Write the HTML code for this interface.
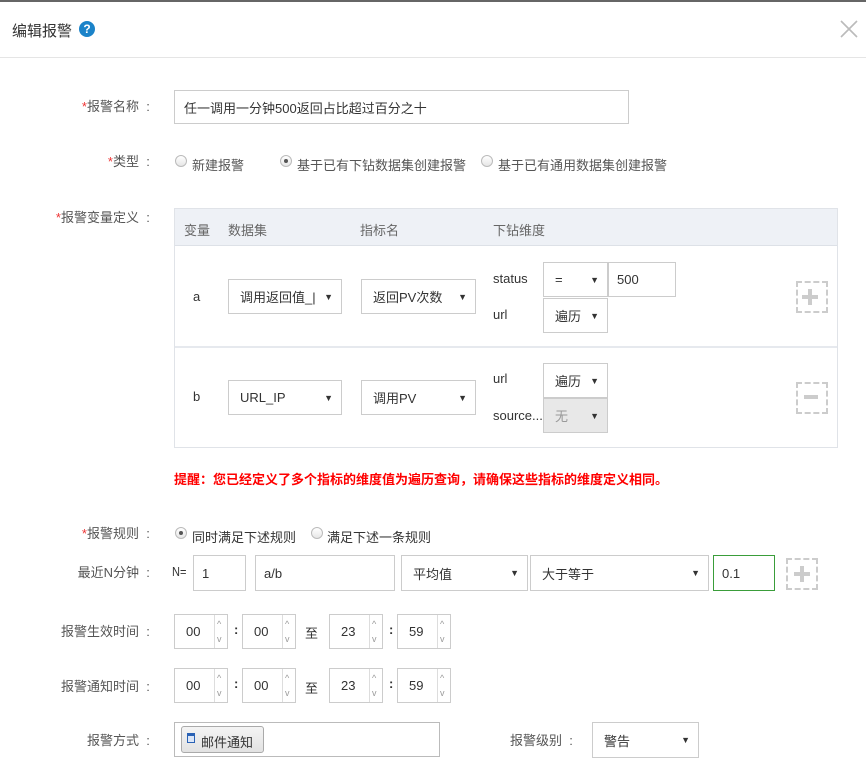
<!DOCTYPE html>
<html><head><meta charset="utf-8"><style>
*{box-sizing:border-box;margin:0;padding:0}
body{width:866px;height:765px;background:#fff;position:relative;overflow:hidden;font-family:"Liberation Sans","Noto Sans CJK SC",sans-serif;font-size:13px;color:#555}
.a{position:absolute;white-space:nowrap}
.lbl{position:absolute;text-align:right;white-space:nowrap;line-height:16px}
.lbl .c{display:inline-block;width:18px;text-align:center}
.r{color:#e33}
.box{position:absolute;border:1px solid #ccc;background:#fff;line-height:normal;padding-left:11px;display:flex;align-items:center;color:#333}
.sel::after{content:"▼";position:absolute;right:8px;font-size:9px;color:#333;top:50%;transform:translateY(-50%)}
.radio{position:absolute;width:12px;height:12px;border-radius:50%;border:1px solid #bbb;background:linear-gradient(#fff,#e6e6e6)}
.radio.on::after{content:"";position:absolute;left:3px;top:3px;width:4px;height:4px;border-radius:50%;background:#555}
.dash{position:absolute;border:2px dashed #ccc;width:32px;height:32px}
.spin{position:absolute;border:1px solid #ccc;height:35px;width:54px;color:#333}
.spin span{position:absolute;left:11px;top:9px}
.spin i{position:absolute;left:39px;top:0;bottom:0;width:1px;background:#ddd}
.spin b{position:absolute;left:42px;font-weight:normal;font-size:9px;color:#999}
</style></head><body>
<div class="a" style="left:0;top:0;width:866px;height:2px;background:#666"></div>
<div class="a" style="left:12px;top:20px;font-size:15px;color:#333">编辑报警</div>
<div class="a" style="left:79px;top:21px;width:16px;height:16px;border-radius:50%;background:#1b83c9;color:#fff;font-size:12px;font-weight:bold;text-align:center;line-height:16px">?</div>
<svg class="a" style="left:840px;top:20px" width="18" height="18"><path d="M1 1L17 17M17 1L1 17" stroke="#bbb" stroke-width="1.6"/></svg>
<div class="a" style="left:0;top:57px;width:866px;height:1px;background:#e5e5e5"></div>

<div class="lbl" style="right:709px;top:99px"><span class="r">*</span>报警名称<span class="c">:</span></div>
<div class="box" style="left:174px;top:90px;width:455px;height:34px;padding-left:9px">任一调用一分钟500返回占比超过百分之十</div>

<div class="lbl" style="right:709px;top:154px"><span class="r">*</span>类型<span class="c">:</span></div>
<div class="radio" style="left:175px;top:155px"></div><div class="a" style="left:192px;top:155px">新建报警</div>
<div class="radio on" style="left:280px;top:155px"></div><div class="a" style="left:297px;top:155px">基于已有下钻数据集创建报警</div>
<div class="radio" style="left:481px;top:155px"></div><div class="a" style="left:498px;top:155px">基于已有通用数据集创建报警</div>

<div class="lbl" style="right:709px;top:210px"><span class="r">*</span>报警变量定义<span class="c">:</span></div>
<div class="a" style="left:174px;top:208px;width:664px;height:240px;border:1px solid #e0e3e8"></div>
<div class="a" style="left:175px;top:209px;width:662px;height:37px;background:#eef1f6;border-bottom:1px solid #dde1e7"></div>
<div class="a" style="left:184px;top:220px;color:#666">变量</div>
<div class="a" style="left:228px;top:220px;color:#666">数据集</div>
<div class="a" style="left:360px;top:220px;color:#666">指标名</div>
<div class="a" style="left:493px;top:220px;color:#666">下钻维度</div>
<div class="a" style="left:175px;top:346px;width:662px;height:2px;background:#e6e9ee"></div>

<div class="a" style="left:193px;top:289px;color:#333">a</div>
<div class="box sel" style="left:228px;top:279px;width:114px;height:35px">调用返回值_|</div>
<div class="box sel" style="left:361px;top:279px;width:115px;height:35px">返回PV次数</div>
<div class="a" style="left:493px;top:271px;color:#333">status</div>
<div class="box sel" style="left:543px;top:262px;width:65px;height:35px">=</div>
<div class="box" style="left:608px;top:262px;width:68px;height:35px;padding-left:8px">500</div>
<div class="a" style="left:493px;top:307px;color:#333">url</div>
<div class="box sel" style="left:543px;top:298px;width:65px;height:35px">遍历</div>
<div class="dash" style="left:796px;top:281px"></div>
<div class="a" style="left:802px;top:295px;width:16px;height:4px;background:#ccc"></div>
<div class="a" style="left:808px;top:289px;width:4px;height:16px;background:#ccc"></div>

<div class="a" style="left:193px;top:389px;color:#333">b</div>
<div class="box sel" style="left:228px;top:380px;width:114px;height:35px">URL_IP</div>
<div class="box sel" style="left:361px;top:380px;width:115px;height:35px">调用PV</div>
<div class="a" style="left:493px;top:371px;color:#333">url</div>
<div class="box sel" style="left:543px;top:363px;width:65px;height:35px">遍历</div>
<div class="a" style="left:493px;top:408px;color:#333">source...</div>
<div class="box sel" style="left:543px;top:398px;width:65px;height:35px;background:#e8e8e8;color:#999">无</div>
<div class="dash" style="left:796px;top:382px"></div>
<div class="a" style="left:804px;top:395px;width:14px;height:4px;background:#ccc"></div>

<div class="a" style="left:174px;top:469px;color:#f00;font-weight:bold">提醒：您已经定义了多个指标的维度值为遍历查询，请确保这些指标的维度定义相同。</div>

<div class="lbl" style="right:709px;top:526px"><span class="r">*</span>报警规则<span class="c">:</span></div>
<div class="radio on" style="left:175px;top:527px"></div><div class="a" style="left:192px;top:527px;color:#333">同时满足下述规则</div>
<div class="radio" style="left:311px;top:527px"></div><div class="a" style="left:327px;top:527px;color:#333">满足下述一条规则</div>

<div class="lbl" style="right:709px;top:565px">最近N分钟<span class="c">:</span></div>
<div class="a" style="left:172px;top:564px;color:#333;transform:scaleX(.85);transform-origin:left">N=</div>
<div class="box" style="left:193px;top:555px;width:53px;height:36px;padding-left:8px">1</div>
<div class="box" style="left:255px;top:555px;width:140px;height:36px;padding-left:8px">a/b</div>
<div class="box sel" style="left:401px;top:555px;width:127px;height:36px">平均值</div>
<div class="box sel" style="left:530px;top:555px;width:179px;height:36px">大于等于</div>
<div class="box" style="left:713px;top:555px;width:62px;height:36px;border-color:#3a9d3a;padding-left:8px">0.1</div>
<div class="dash" style="left:786px;top:558px;width:32px;height:32px"></div>
<div class="a" style="left:794px;top:572px;width:16px;height:4px;background:#ccc"></div>
<div class="a" style="left:800px;top:566px;width:4px;height:16px;background:#ccc"></div>

<div class="lbl" style="right:709px;top:624px">报警生效时间<span class="c">:</span></div>
<div class="spin" style="left:174px;top:614px"><span>00</span><i></i><b style="top:4px">^</b><b style="top:19px">v</b></div>
<div class="a" style="left:234px;top:622px;font-weight:bold;color:#333">:</div>
<div class="spin" style="left:242px;top:614px"><span>00</span><i></i><b style="top:4px">^</b><b style="top:19px">v</b></div>
<div class="a" style="left:305px;top:623px;color:#333">至</div>
<div class="spin" style="left:329px;top:614px"><span>23</span><i></i><b style="top:4px">^</b><b style="top:19px">v</b></div>
<div class="a" style="left:389px;top:622px;font-weight:bold;color:#333">:</div>
<div class="spin" style="left:397px;top:614px"><span>59</span><i></i><b style="top:4px">^</b><b style="top:19px">v</b></div>

<div class="lbl" style="right:709px;top:679px">报警通知时间<span class="c">:</span></div>
<div class="spin" style="left:174px;top:668px"><span>00</span><i></i><b style="top:4px">^</b><b style="top:19px">v</b></div>
<div class="a" style="left:234px;top:676px;font-weight:bold;color:#333">:</div>
<div class="spin" style="left:242px;top:668px"><span>00</span><i></i><b style="top:4px">^</b><b style="top:19px">v</b></div>
<div class="a" style="left:305px;top:678px;color:#333">至</div>
<div class="spin" style="left:329px;top:668px"><span>23</span><i></i><b style="top:4px">^</b><b style="top:19px">v</b></div>
<div class="a" style="left:389px;top:676px;font-weight:bold;color:#333">:</div>
<div class="spin" style="left:397px;top:668px"><span>59</span><i></i><b style="top:4px">^</b><b style="top:19px">v</b></div>

<div class="lbl" style="right:709px;top:733px">报警方式<span class="c">:</span></div>
<div class="a" style="left:174px;top:722px;width:266px;height:35px;border:1px solid #bbb"></div>
<div class="a" style="left:181px;top:726px;width:83px;height:27px;border:1px solid #aaa;border-radius:3px;background:linear-gradient(#f4f4f4,#e2e2e2);color:#333;padding:5px 0 0 19px">邮件通知</div>
<div class="a" style="left:187px;top:733px;width:8px;height:10px;border:1px solid #2a62b5;background:#dbe6f7;border-top-width:3px"></div>
<div class="lbl" style="right:286px;top:733px">报警级别<span class="c">:</span></div>
<div class="box sel" style="left:592px;top:722px;width:107px;height:36px">警告</div>
</body></html>
